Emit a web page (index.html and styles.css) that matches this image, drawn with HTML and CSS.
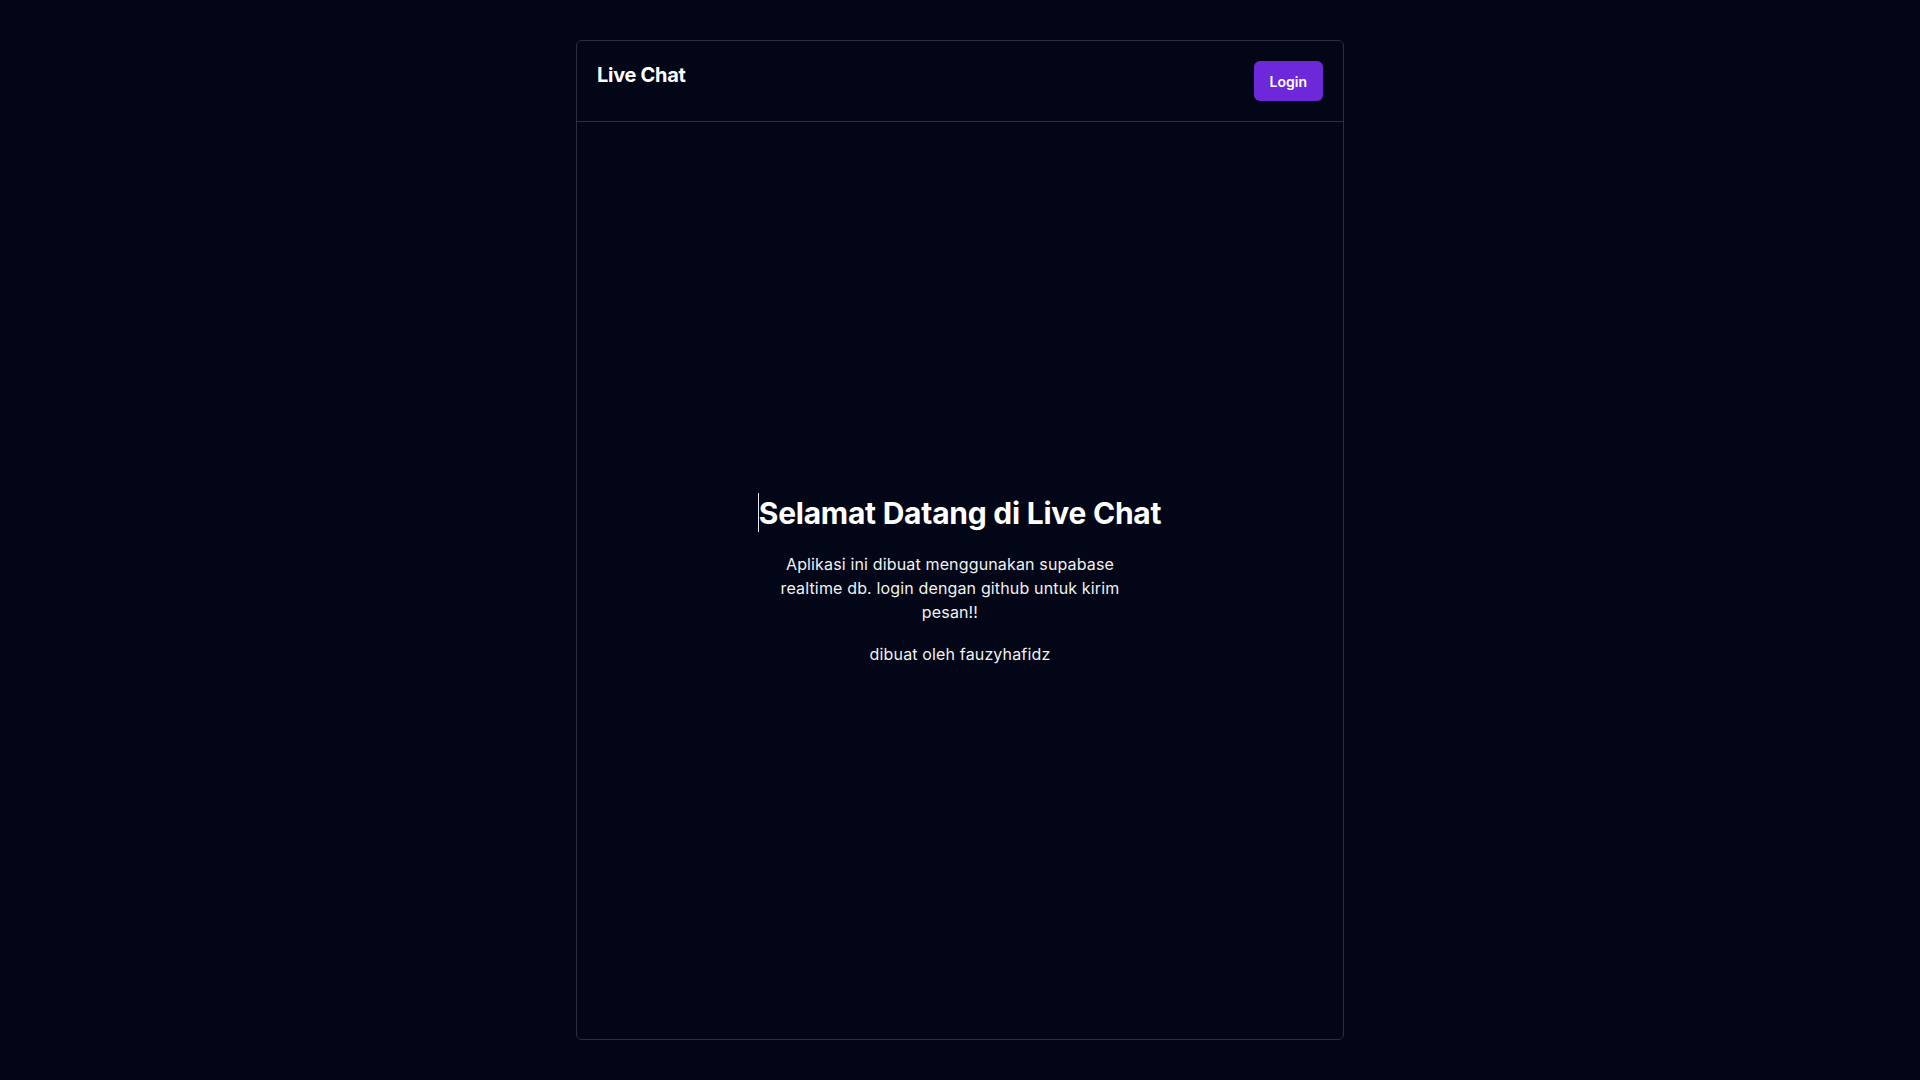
FILE: index.html
```
<!DOCTYPE html>
<html lang="id">
<head>
<meta charset="utf-8">
<title>Live Chat</title>
<link rel="stylesheet" href="styles.css">
</head>
<body>
<main class="page">
  <section class="card">
    <header class="card-header">
      <h1 class="brand">Live Chat</h1>
      <button class="login-btn" type="button">Login</button>
    </header>
    <div class="card-body">
      <div class="welcome">
        <h2 class="welcome-title"><span class="caret"></span>Selamat Datang di Live Chat</h2>
        <p class="welcome-text">Aplikasi ini dibuat menggunakan supabase realtime db. login dengan github untuk kirim pesan!!</p>
        <p class="welcome-author">dibuat oleh fauzyhafidz</p>
      </div>
    </div>
  </section>
</main>
</body>
</html>
```
FILE: styles.css
```
* { box-sizing: border-box; }
html, body {
  margin: 0;
  padding: 0;
  background: #020617;
  color: #fff;
  font-family: Inter, "Noto Sans", sans-serif;
}
.page {
  height: 1080px;
  padding: 40px 0;
  display: flex;
  justify-content: center;
}
.card {
  width: 768px;
  height: 1000px;
  border: 1px solid #2a2f3b;
  border-radius: 6px;
  display: flex;
  flex-direction: column;
}
.card-header {
  display: flex;
  justify-content: space-between;
  align-items: flex-start;
  padding: 20px;
  border-bottom: 1px solid #2a2f3b;
}
.brand {
  margin: 0;
  font-size: 20px;
  line-height: 28px;
  font-weight: 700;
  letter-spacing: -0.3px;
}
.login-btn {
  height: 40px;
  padding: 0 16px;
  border: none;
  border-radius: 6px;
  background: #6d28d9;
  color: #fff;
  font-family: inherit;
  font-size: 14px;
  font-weight: 600;
}
.card-body {
  flex: 1;
  display: flex;
  align-items: center;
  justify-content: center;
}
.welcome {
  display: flex;
  flex-direction: column;
  align-items: center;
  text-align: center;
}
.welcome-title {
  position: relative;
  margin: 0;
  font-size: 30px;
  line-height: 36px;
  font-weight: 700;
  letter-spacing: -0.25px;
}
.caret {
  position: absolute;
  left: -1px;
  top: -2px;
  width: 1px;
  height: 39px;
  background: #e5e7eb;
}
.welcome-text {
  margin: 21px 20px 0 0;
  width: 384px;
  font-size: 16px;
  line-height: 24px;
  letter-spacing: 0.15px;
  color: #f1f1f1;
}
.welcome-author {
  margin: 18px 0 0;
  font-size: 16px;
  line-height: 24px;
  letter-spacing: 0.15px;
  color: #f1f1f1;
}
```
